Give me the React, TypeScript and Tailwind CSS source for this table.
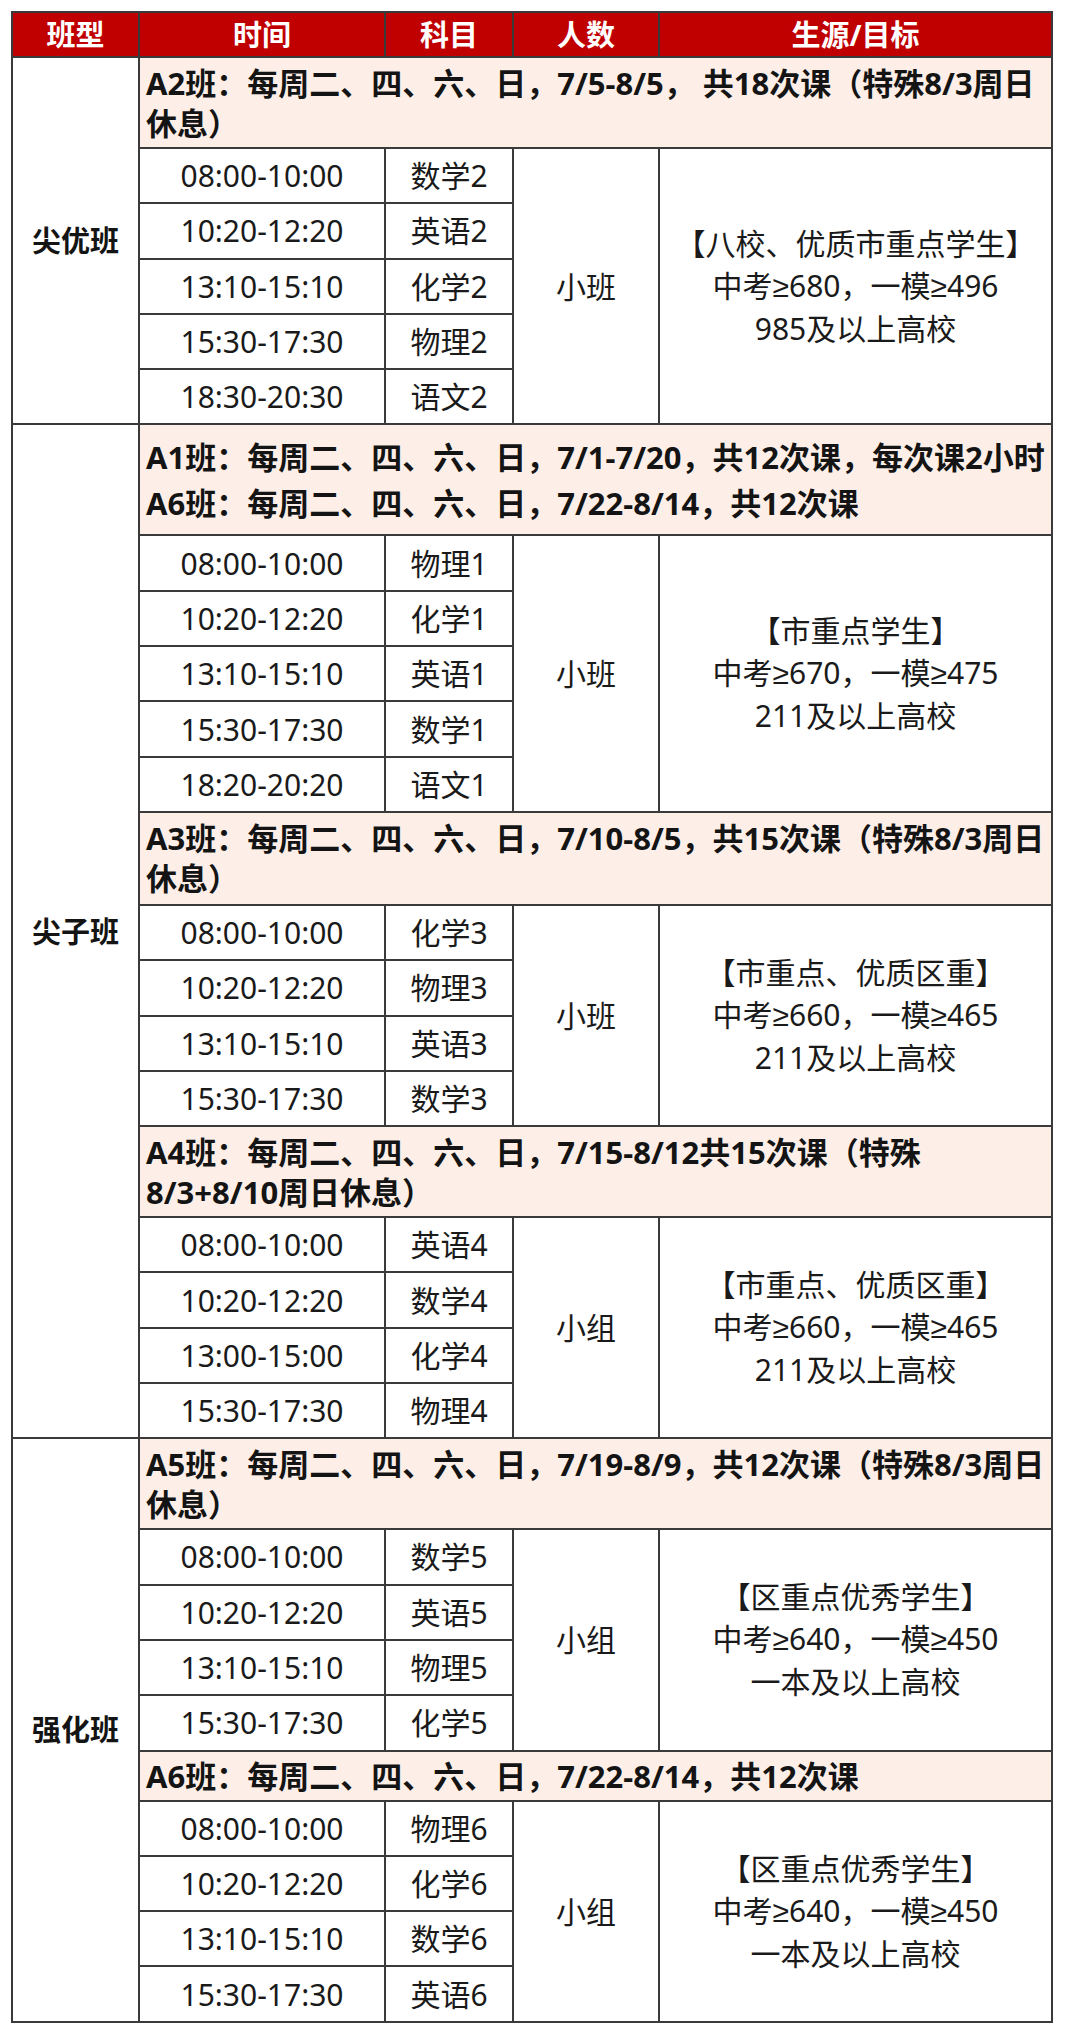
import React from "react";

type Row = [string, string];
type Block = {
  title: string[];
  titleH: string;
  leading: string;
  rows: Row[];
  size: string;
  target: string[];
};

const FONT = { fontFamily: '"Noto Sans", "Noto Sans CJK SC", sans-serif' };

const groups: { label: string; blocks: Block[] }[] = [
  {
    label: "尖优班",
    blocks: [
      {
        title: ["A2班：每周二、四、六、日，7/5-8/5， 共18次课（特殊8/3周日", "休息）"],
        titleH: "h-[89px]",
        leading: "leading-[40px]",
        rows: [
          ["08:00-10:00", "数学2"],
          ["10:20-12:20", "英语2"],
          ["13:10-15:10", "化学2"],
          ["15:30-17:30", "物理2"],
          ["18:30-20:30", "语文2"],
        ],
        size: "小班",
        target: ["【八校、优质市重点学生】", "中考≥680，一模≥496", "985及以上高校"],
      },
    ],
  },
  {
    label: "尖子班",
    blocks: [
      {
        title: [
          "A1班：每周二、四、六、日，7/1-7/20，共12次课，每次课2小时",
          "A6班：每周二、四、六、日，7/22-8/14，共12次课",
        ],
        titleH: "h-[109px]",
        leading: "leading-[46px]",
        rows: [
          ["08:00-10:00", "物理1"],
          ["10:20-12:20", "化学1"],
          ["13:10-15:10", "英语1"],
          ["15:30-17:30", "数学1"],
          ["18:20-20:20", "语文1"],
        ],
        size: "小班",
        target: ["【市重点学生】", "中考≥670，一模≥475", "211及以上高校"],
      },
      {
        title: ["A3班：每周二、四、六、日，7/10-8/5，共15次课（特殊8/3周日", "休息）"],
        titleH: "h-[91px]",
        leading: "leading-[40px]",
        rows: [
          ["08:00-10:00", "化学3"],
          ["10:20-12:20", "物理3"],
          ["13:10-15:10", "英语3"],
          ["15:30-17:30", "数学3"],
        ],
        size: "小班",
        target: ["【市重点、优质区重】", "中考≥660，一模≥465", "211及以上高校"],
      },
      {
        title: ["A4班：每周二、四、六、日，7/15-8/12共15次课（特殊", "8/3+8/10周日休息）"],
        titleH: "h-[89px]",
        leading: "leading-[40px]",
        rows: [
          ["08:00-10:00", "英语4"],
          ["10:20-12:20", "数学4"],
          ["13:00-15:00", "化学4"],
          ["15:30-17:30", "物理4"],
        ],
        size: "小组",
        target: ["【市重点、优质区重】", "中考≥660，一模≥465", "211及以上高校"],
      },
    ],
  },
  {
    label: "强化班",
    blocks: [
      {
        title: ["A5班：每周二、四、六、日，7/19-8/9，共12次课（特殊8/3周日", "休息）"],
        titleH: "h-[89px]",
        leading: "leading-[40px]",
        rows: [
          ["08:00-10:00", "数学5"],
          ["10:20-12:20", "英语5"],
          ["13:10-15:10", "物理5"],
          ["15:30-17:30", "化学5"],
        ],
        size: "小组",
        target: ["【区重点优秀学生】", "中考≥640，一模≥450", "一本及以上高校"],
      },
      {
        title: ["A6班：每周二、四、六、日，7/22-8/14，共12次课"],
        titleH: "h-[48px]",
        leading: "leading-[40px]",
        rows: [
          ["08:00-10:00", "物理6"],
          ["10:20-12:20", "化学6"],
          ["13:10-15:10", "数学6"],
          ["15:30-17:30", "英语6"],
        ],
        size: "小组",
        target: ["【区重点优秀学生】", "中考≥640，一模≥450", "一本及以上高校"],
      },
    ],
  },
];

function WithGe({ text }: { text: string }) {
  const parts = text.split("≥");
  return (
    <>
      {parts.map((p, i) => (
        <React.Fragment key={i}>
          {i > 0 && (
            <span className="[font-family:'Liberation_Sans',sans-serif]">≥</span>
          )}
          {p}
        </React.Fragment>
      ))}
    </>
  );
}

function BlockView({ b }: { b: Block }) {
  return (
    <>
      <div
        className={`${b.titleH} bg-[#fdefe8] flex flex-col justify-center pl-[6px] text-[31px] font-bold text-[#141414] ${b.leading} whitespace-nowrap`}
      >
        {b.title.map((t, i) => (
          <div key={i}>{t}</div>
        ))}
      </div>
      <div className="flex gap-[2px]">
        <div className="flex flex-col gap-[2px] w-[372px]">
          {b.rows.map(([time, subj], i) => (
            <div key={i} className="flex gap-[2px] h-[53.3px]">
              <div className="w-[244px] bg-white flex items-center justify-center text-[30px] text-[#1a1a1a]">
                {time}
              </div>
              <div className="w-[126px] bg-white flex items-center justify-center text-[30px] text-[#1a1a1a]">
                {subj}
              </div>
            </div>
          ))}
        </div>
        <div className="w-[144px] bg-white flex items-center justify-center text-[30px] text-[#1a1a1a]">
          {b.size}
        </div>
        <div className="w-[391px] bg-white flex flex-col items-center justify-center text-[30px] leading-[42px] text-[#1a1a1a] whitespace-nowrap">
          {b.target.map((t, i) => (
            <div key={i}>
              <WithGe text={t} />
            </div>
          ))}
        </div>
      </div>
    </>
  );
}

export default function App() {
  const headers: [string, string][] = [
    ["班型", "w-[125px]"],
    ["时间", "w-[244px]"],
    ["科目", "w-[126px]"],
    ["人数", "w-[144px]"],
    ["生源/目标", "w-[391px]"],
  ];
  return (
    <div className="bg-white w-[1080px] min-h-[2033px] pt-[11px] pl-[11px]" style={FONT}>
      <div className="w-[1042px] bg-[#3a3a3a] p-[2px] flex flex-col gap-[2px]">
        <div className="flex gap-[2px] h-[43px]">
          {headers.map(([t, w]) => (
            <div
              key={t}
              className={`${w} bg-[#c00000] flex items-center justify-center text-white font-bold text-[29px]`}
            >
              {t}
            </div>
          ))}
        </div>
        {groups.map((g) => (
          <div key={g.label} className="flex gap-[2px]">
            <div className="w-[125px] bg-white flex items-center justify-center font-bold text-[29px] text-[#141414]">
              {g.label}
            </div>
            <div className="w-[911px] flex flex-col gap-[2px]">
              {g.blocks.map((b, i) => (
                <BlockView key={i} b={b} />
              ))}
            </div>
          </div>
        ))}
      </div>
    </div>
  );
}
